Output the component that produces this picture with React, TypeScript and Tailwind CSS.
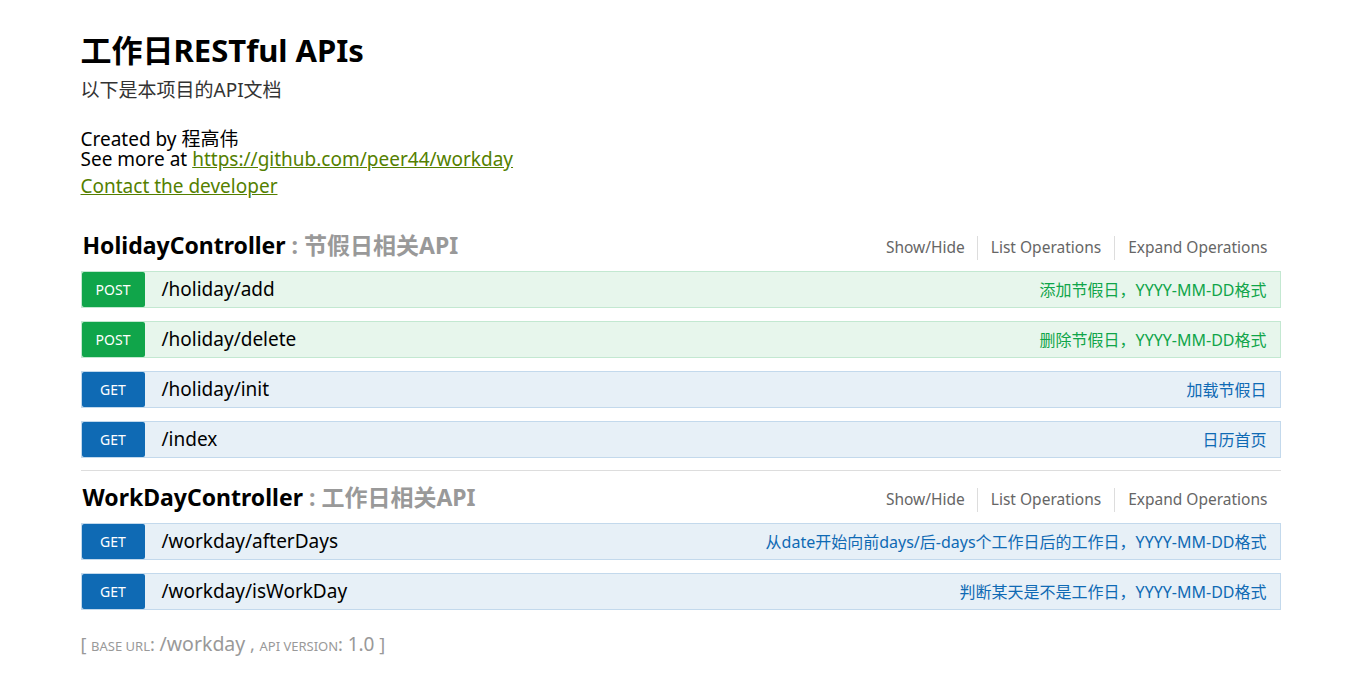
import React from 'react';

type Op = { method: 'POST' | 'GET'; path: string; summary: string };

const sections: { name: string; desc: string; ops: Op[] }[] = [
  {
    name: 'HolidayController',
    desc: '节假日相关API',
    ops: [
      { method: 'POST', path: '/holiday/add', summary: '添加节假日，YYYY-MM-DD格式' },
      { method: 'POST', path: '/holiday/delete', summary: '删除节假日，YYYY-MM-DD格式' },
      { method: 'GET', path: '/holiday/init', summary: '加载节假日' },
      { method: 'GET', path: '/index', summary: '日历首页' },
    ],
  },
  {
    name: 'WorkDayController',
    desc: '工作日相关API',
    ops: [
      { method: 'GET', path: '/workday/afterDays', summary: '从date开始向前days/后-days个工作日后的工作日，YYYY-MM-DD格式' },
      { method: 'GET', path: '/workday/isWorkDay', summary: '判断某天是不是工作日，YYYY-MM-DD格式' },
    ],
  },
];

const OpRow = ({ op }: { op: Op }) => {
  const post = op.method === 'POST';
  return (
    <div
      className={
        post
          ? 'flex items-center h-[37px] border border-[#c3e8d1] bg-[#e7f6ec]'
          : 'flex items-center h-[37px] border border-[#c3d9ec] bg-[#e7f0f7]'
      }
    >
      <span
        className={
          post
            ? 'w-[63px] h-[35px] flex items-center justify-center rounded-[2px] bg-[#10a54a] text-white text-[14px]'
            : 'w-[63px] h-[35px] flex items-center justify-center rounded-[2px] bg-[#0f6ab4] text-white text-[14px]'
        }
      >
        {op.method}
      </span>
      <span className="ml-[17px] text-[19px] text-black">{op.path}</span>
      <span className={post ? 'ml-auto pr-[13px] text-[16px] text-[#10a54a]' : 'ml-auto pr-[13px] text-[16px] text-[#0f6ab4]'}>
        {op.summary}
      </span>
    </div>
  );
};

export default function App() {
  return (
    <div className="min-h-screen bg-white font-['Noto_Sans','Noto_Sans_CJK_SC',sans-serif]">
      <div className="w-[1200px] mx-auto pt-[30px]">
        <h1 className="text-[31px] font-bold leading-[40px] text-black">工作日RESTful APIs</h1>
        <p className="mt-[8px] text-[19px] leading-[24px] text-[#333]">以下是本项目的API文档</p>
        <div className="mt-[27px] text-[19px] leading-[20px] text-black">
          <div>Created by 程高伟</div>
          <div>
            See more at{' '}
            <a className="text-[#547f00] underline" href="#">
              https://github.com/peer44/workday
            </a>
          </div>
          <div className="mt-[7px]">
            <a className="text-[#547f00] underline" href="#">
              Contact the developer
            </a>
          </div>
        </div>

        <div className="mt-[34px]">
          {sections.map((s, i) => (
            <div key={s.name} className={i > 0 ? 'border-t border-[#ddd] mt-[12px] pt-[11px]' : ''}>
              <div className="flex items-center h-[30px] mb-[11px]">
                <h2 className="pl-[2px] text-[23px] font-bold text-black">
                  {s.name}
                  <span className="text-[#999]"> : {s.desc}</span>
                </h2>
                <div className="ml-auto flex items-center text-[15.5px] text-[#666] pr-[13px] pt-[6px]">
                  <span className="pr-[12px] border-r border-[#ddd]">Show/Hide</span>
                  <span className="px-[13px] border-r border-[#ddd]">List Operations</span>
                  <span className="pl-[13px]">Expand Operations</span>
                </div>
              </div>
              <div className="flex flex-col gap-[13px]">
                {s.ops.map((op) => (
                  <OpRow key={op.path} op={op} />
                ))}
              </div>
            </div>
          ))}
        </div>

        <div className="mt-[19px] text-[#999] text-[18px] flex items-baseline">
          <span>[&nbsp;</span>
          <span className="text-[13px] uppercase">base url</span>
          <span>:&nbsp;</span>
          <span className="text-[19.5px]">/workday</span>
          <span>&nbsp;,&nbsp;</span>
          <span className="text-[13px] uppercase">api version</span>
          <span>:&nbsp;</span>
          <span className="text-[19px]">1.0</span>
          <span>&nbsp;]</span>
        </div>
      </div>
    </div>
  );
}
